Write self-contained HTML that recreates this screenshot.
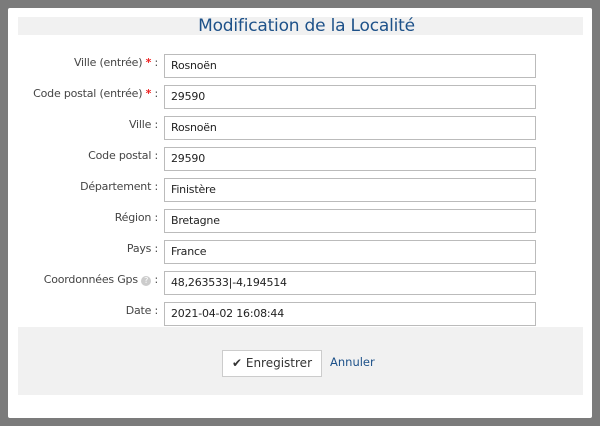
<html><head><style>
body{margin:0;width:600px;height:426px;background:#7b7b7b;font-family:"DejaVu Sans","Liberation Sans",sans-serif;overflow:hidden;position:relative}
.dlg{position:absolute;left:8px;top:8px;width:584px;height:410px;background:#fff;border-radius:2px}
.title{position:absolute;left:10px;top:9px;width:565px;height:18px;background:#f1f1f1;color:#1d5189;font-size:17px;text-align:center;line-height:18px;padding-left:12px;box-sizing:border-box;letter-spacing:-0.2px}
.lab{position:absolute;right:434px;font-size:11px;color:#444;white-space:nowrap;letter-spacing:-0.2px}
.lab b{color:#e22;font-weight:bold}
.inp{position:absolute;left:156px;width:372px;border:1px solid #bbb;font-size:11px;color:#222;line-height:22px;padding-left:6px;box-sizing:border-box;height:24px;letter-spacing:-0.2px}
.foot{position:absolute;left:10px;top:319px;width:565px;height:68px;background:#f1f1f1}
.btn{position:absolute;left:214px;top:342px;width:100px;height:27px;border:1px solid #ccc;background:#fff;box-sizing:border-box;font-size:12px;color:#333;line-height:25px;text-align:center}
.ann{position:absolute;left:322px;top:347px;font-size:11.5px;color:#1d5189}
</style></head><body>
<div class="dlg">
<div class="title">Modification de la Localité</div>
<div class="lab" style="top:48px">Ville (entrée) <b>*</b> :</div><div class="inp" style="top:46px">Rosnoën</div>
<div class="lab" style="top:79px">Code postal (entrée) <b>*</b> :</div><div class="inp" style="top:77px">29590</div>
<div class="lab" style="top:110px">Ville :</div><div class="inp" style="top:108px">Rosnoën</div>
<div class="lab" style="top:141px">Code postal :</div><div class="inp" style="top:139px">29590</div>
<div class="lab" style="top:172px">Département :</div><div class="inp" style="top:170px">Finistère</div>
<div class="lab" style="top:203px">Région :</div><div class="inp" style="top:201px">Bretagne</div>
<div class="lab" style="top:234px">Pays :</div><div class="inp" style="top:232px">France</div>
<div class="lab" style="top:265px">Coordonnées Gps <span style="display:inline-block;width:10px;height:10px;border-radius:50%;background:#ccc;color:#fff;font-size:8px;line-height:10px;text-align:center;vertical-align:0">?</span> :</div><div class="inp" style="top:263px">48,263533|-4,194514</div>
<div class="lab" style="top:296px">Date :</div><div class="inp" style="top:294px">2021-04-02 16:08:44</div>
<div class="foot"></div>
<div class="btn"><b>✔</b> Enregistrer</div>
<div class="ann">Annuler</div>
</div>
</body></html>
